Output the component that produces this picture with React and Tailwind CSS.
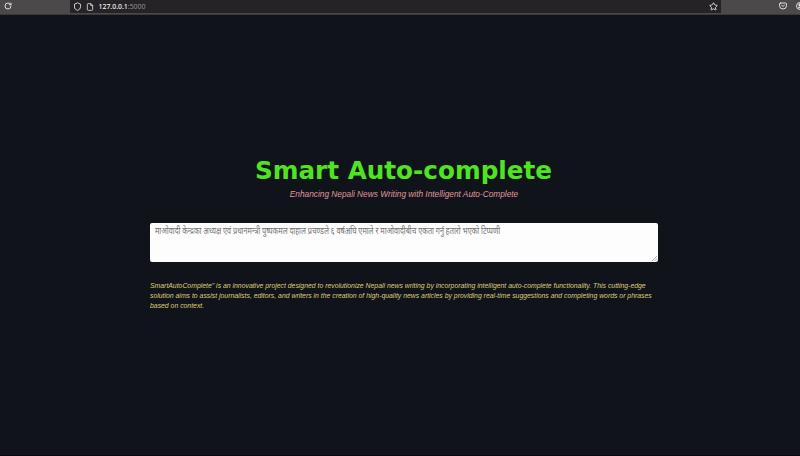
import { RotateCw, Shield, File, Star } from "lucide-react";

function BrowserBar() {
  return (
    <header className="flex h-[15px] items-start border-b-[1px] border-[#3a3a3b] bg-[#4b494a] text-[#dededf]">
      <div className="w-[70px] pt-[2px] pl-[4px]">
        <RotateCw size={8} strokeWidth={3} />
      </div>
      <div className="flex h-[13px] w-[651px] items-center bg-[#252325] pr-[3px] pl-[3px]">
        <Shield size={9} strokeWidth={2.5} />
        <File size={8} strokeWidth={2.5} className="ml-[4px]" />
        <span className="ml-[4.5px] font-['Noto_Sans',sans-serif] text-[6.9px] leading-[13px] font-medium whitespace-nowrap text-[#f4f4f4]">
          127.0.0.1<span className="font-normal text-[#929092]">:5000</span>
        </span>
        <Star size={9} strokeWidth={2.5} className="ml-auto" />
      </div>
      <svg viewBox="0 0 16 16" className="mt-[2px] ml-[58px] h-[8px] w-[8px] shrink-0" fill="none" stroke="currentColor" strokeWidth="2" strokeLinecap="round" strokeLinejoin="round">
        <path d="M3 2h10a2 2 0 0 1 2 2v3a7 7 0 0 1-14 0V4a2 2 0 0 1 2-2z" />
        <path d="M5 6l3 3 3-3" />
      </svg>
      <div className="ml-auto w-[4px] overflow-hidden pt-[2px]">
        <svg viewBox="0 0 16 16" className="h-[8px] w-[8px]" fill="none" stroke="currentColor" strokeWidth="2">
          <circle cx="8" cy="8" r="7" />
          <circle cx="8" cy="6" r="2.5" fill="currentColor" />
          <path d="M3.5 12.5c1-3 8-3 9 0" fill="currentColor" />
        </svg>
      </div>
    </header>
  );
}

export default function App() {
  return (
    <div className="h-[456px] w-[800px] overflow-hidden border-b border-[#09090c] bg-[#10131a]">
      <BrowserBar />
      <main className="ml-[150px] flex w-[508px] flex-col pt-[140px]">
        <h1 className="mr-[1px] text-center font-['DejaVu_Sans',sans-serif] text-[24.7px] leading-[31px] font-bold whitespace-nowrap text-[#4fe322]">
          Smart Auto-complete
        </h1>
        <p className="text-center font-['Liberation_Sans',sans-serif] text-[8.3px] leading-[16px] whitespace-nowrap text-[#e0969a] italic">
          Enhancing Nepali News Writing with Intelligent Auto-Complete
        </p>
        <div className="mt-[21px] flex h-[39px] w-[508px] items-end rounded-[2px] bg-[#fdfdfd]">
          <span className="ml-[5px] inline-block origin-left scale-x-[0.828] self-start pt-[2px] font-['Noto_Sans',sans-serif] text-[8.8px] leading-[13px] whitespace-nowrap text-[#707070]">
            माओवादी केन्द्रका अध्यक्ष एवं प्रधानमन्त्री पुष्पकमल दाहाल प्रचण्डले ६ वर्षअघि एमाले र माओवादीबीच एकता गर्नु हतारो भएको टिप्पणी
          </span>
          <svg viewBox="0 0 5 5" className="mr-[1px] mb-[1px] ml-auto h-[5px] w-[5px] shrink-0" stroke="#999" strokeWidth="0.8">
            <path d="M0 5L5 0M2.5 5L5 2.5" />
          </svg>
        </div>
        <p className="mt-[18.5px] font-['Liberation_Sans',sans-serif] text-[6.87px] leading-[10.4px] whitespace-nowrap text-[#ddce78] italic">
          SmartAutoComplete" is an innovative project designed to revolutionize Nepali news writing by incorporating intelligent auto-complete functionality. This cutting-edge
          <br />
          solution aims to assist journalists, editors, and writers in the creation of high-quality news articles by providing real-time suggestions and completing words or phrases
          <br />
          based on context.
        </p>
      </main>
    </div>
  );
}
